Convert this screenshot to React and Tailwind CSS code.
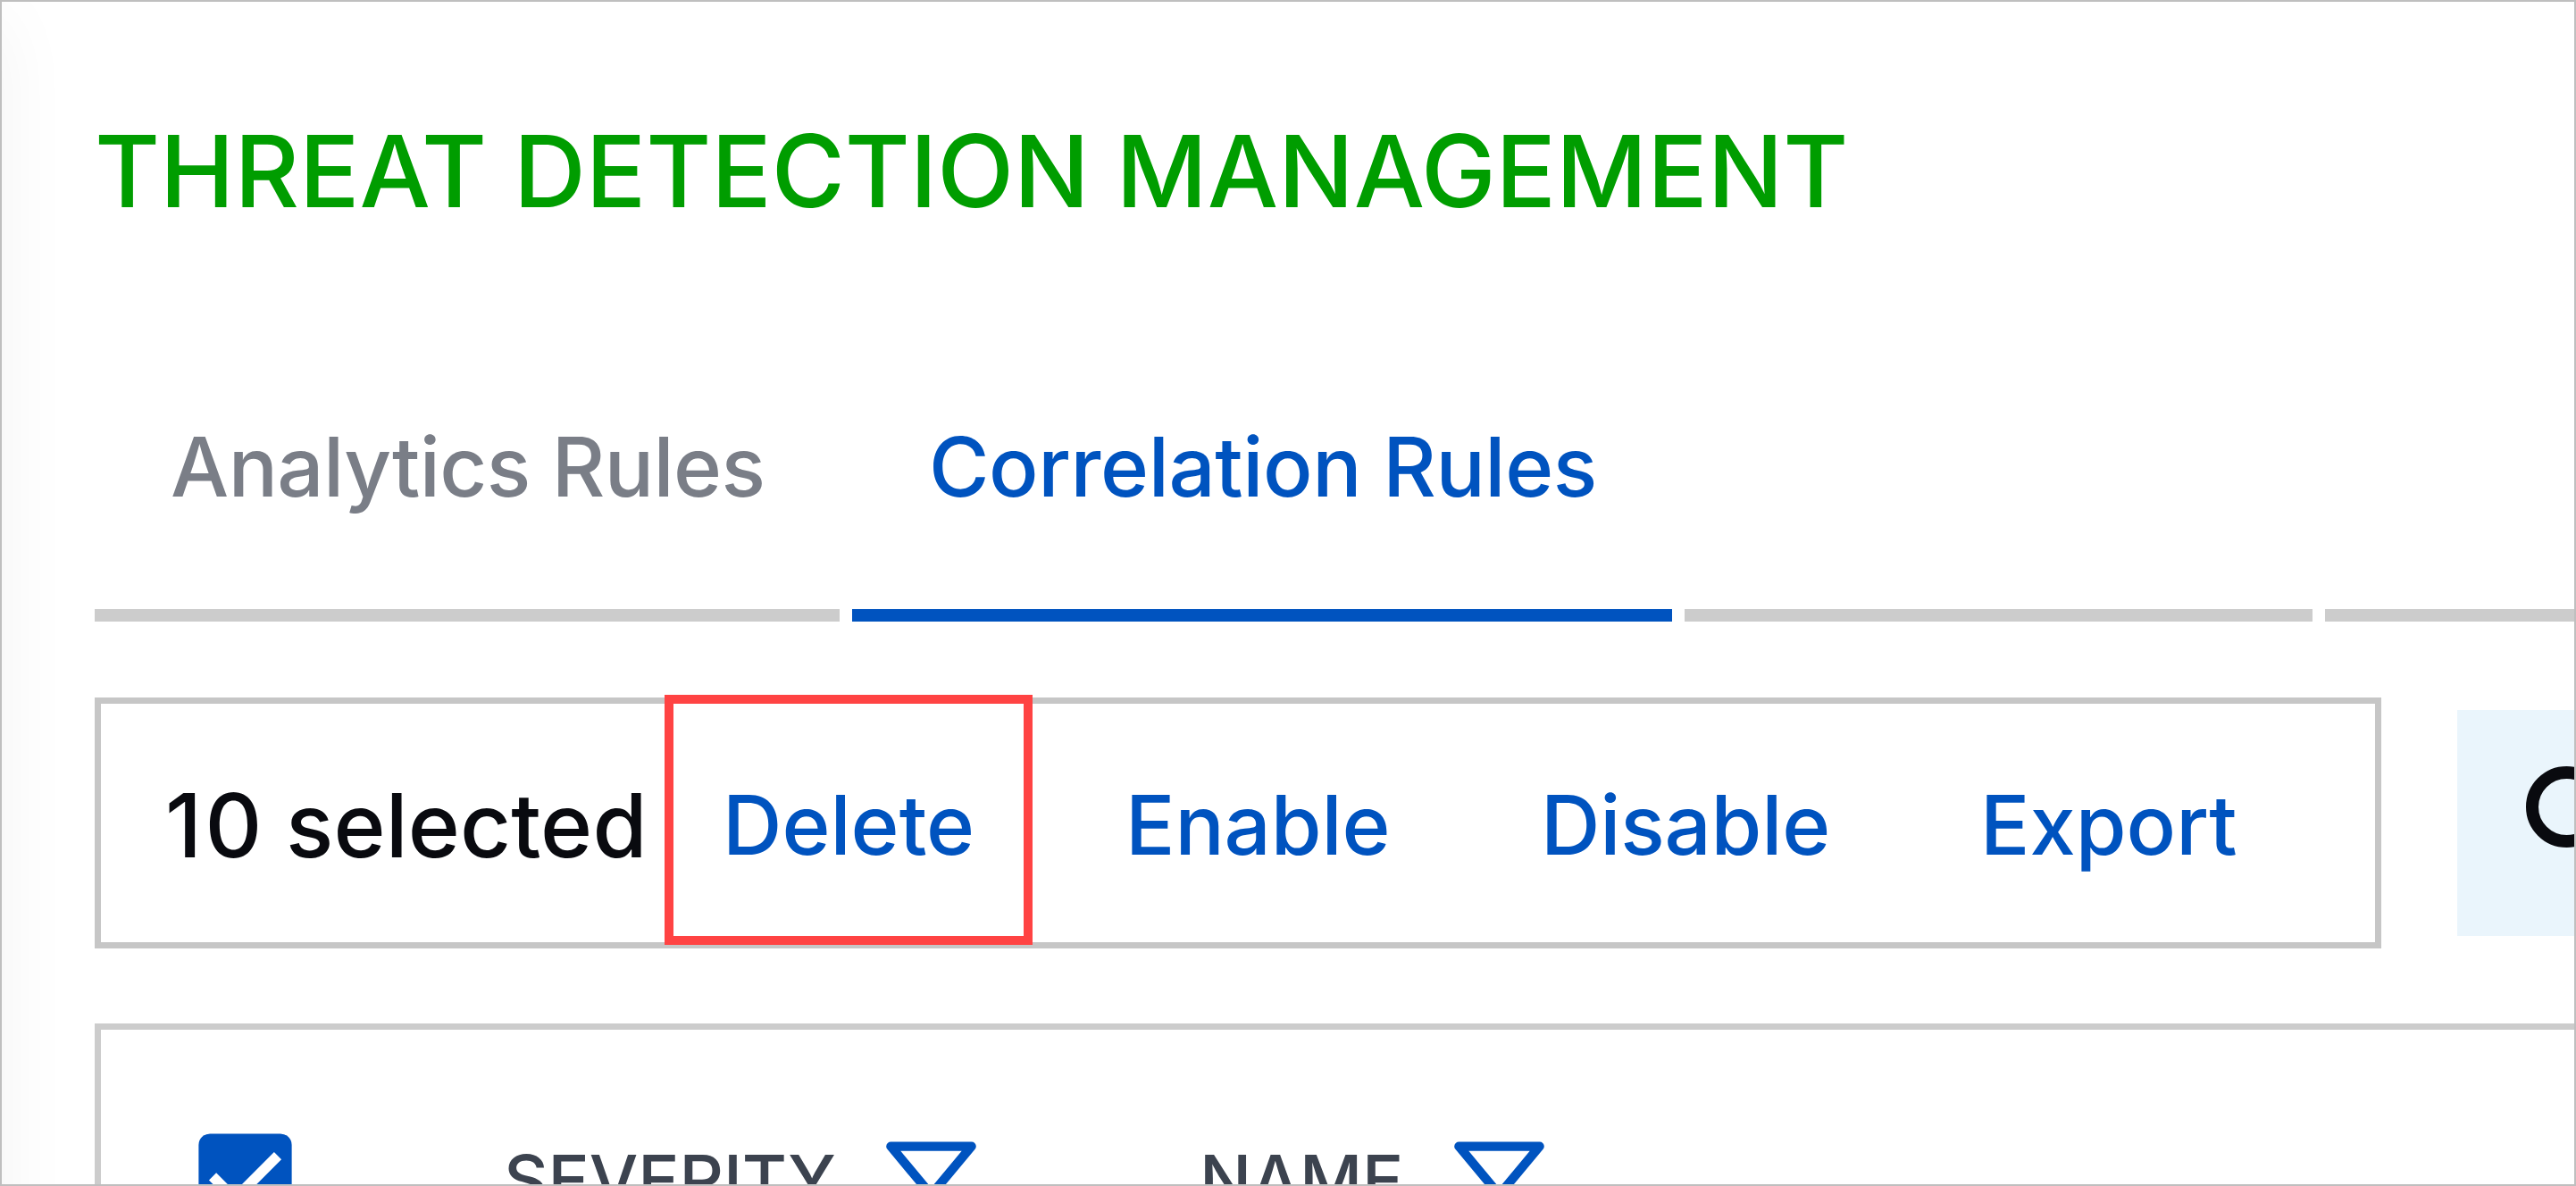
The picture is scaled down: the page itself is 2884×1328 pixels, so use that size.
import React, { useState } from 'react';

const tabs = [
  { id: 'analytics', label: 'Analytics Rules', width: 'w-[834px]', pad: 'pl-[85px] tracking-[-0.6px]' },
  { id: 'correlation', label: 'Correlation Rules', width: 'w-[918px]', pad: 'pl-[86px] tracking-[-0.4px]' },
  { id: 'third', label: '', width: 'w-[703px]', pad: '' },
  { id: 'fourth', label: '', width: 'flex-1', pad: '' },
];

const CheckedBox = () => (
  <svg className="block w-[139px] h-[139px] shrink-0" viewBox="0 0 24 24">
    <rect x="3" y="3" width="18" height="18" rx="2.2" fill="#0053bf" />
    <path d="M10 17l-5-5 1.41-1.41L10 14.17l7.59-7.59L19 8z" fill="#fff" />
  </svg>
);

const FilterIcon = () => (
  <svg className="block w-[101px] h-[70px] shrink-0" viewBox="0 0 101 70">
    <path
      d="M5.3 5.6H95.7L50.5 59.8Z"
      fill="none"
      stroke="#0053bf"
      strokeWidth="10.2"
      strokeLinejoin="round"
    />
  </svg>
);

const App = () => {
  const [activeTab, setActiveTab] = useState('correlation');

  return (
    <div className="relative w-[2884px] h-[1328px] overflow-hidden border-2 border-[#bfbfbf] bg-white pl-[104px] pt-[133px] font-['Inter',sans-serif] font-medium">
      {/* Shadow cast by the side navigation */}
      <div className="absolute -left-[300px] top-[20px] w-[300px] h-[1600px] shadow-[0_0_80px_rgba(0,0,0,0.05)]" />

      <h1 className="text-[112px] leading-[112px] tracking-[-0.06px] text-[#009d00] whitespace-nowrap">
        THREAT DETECTION MANAGEMENT
      </h1>

      {/* Tabs */}
      <div className="mt-[116px] flex gap-[14px]">
        {tabs.map((tab) => (
          <button
            key={tab.id}
            onClick={() => setActiveTab(tab.id)}
            className={`flex items-center h-[333px] border-b-[14px] text-[92px] whitespace-nowrap ${tab.width} ${tab.pad} ${
              activeTab === tab.id ? 'border-[#0053bf] text-[#0053bf]' : 'border-[#cccccc] text-[#7a7e87]'
            }`}
          >
            {tab.label}
          </button>
        ))}
      </div>

      {/* Bulk actions and search */}
      <div className="mt-[85px] flex items-start gap-[85px]">
        <div className="relative flex shrink-0 items-center w-[2560px] h-[281px] border-[7px] border-[#c6c6c6] pl-[72px] pt-[5px] text-[92px] text-[#0053bf] whitespace-nowrap">
          <span className="w-[624px] shrink-0 text-[99px] tracking-[0.1px] text-[#090a0f]">
            <span className="tracking-[3.5px]">1</span>0 selected
          </span>
          <button className="w-[451px] shrink-0 text-left">Delete</button>
          <button className="w-[465px] shrink-0 text-left tracking-[-0.1px]">Enable</button>
          <button className="w-[492px] shrink-0 text-left tracking-[-0.2px]">Disable</button>
          <button className="shrink-0 text-left">Export</button>
          <div className="absolute left-[631px] -top-[10px] w-[412px] h-[280px] border-[10px] border-[#ff4343]" />
        </div>
        <div className="mt-[14px] h-[253px] flex-1 overflow-hidden bg-[#eaf5fc] pl-[77px] pt-[63px]">
          <svg className="block w-[120px] h-[120px]" viewBox="0 0 120 120">
            <circle cx="45.5" cy="45.5" r="38.5" fill="none" stroke="#090a0f" strokeWidth="14" />
            <path d="M73 73l38 38" stroke="#090a0f" strokeWidth="14" />
          </svg>
        </div>
      </div>

      {/* Rules table header */}
      <div className="mt-[84px] flex items-start h-[260px] border-l-[7px] border-t-[7px] border-[#cccccc] pl-[92px] pt-[99px] text-[#3c434f]">
        <CheckedBox />
        <span className="ml-[220px] mt-[27px] w-[428px] shrink-0 text-[77px] leading-[84px] tracking-[-0.2px]">SEVERITY</span>
        <div className="mt-[26px]">
          <FilterIcon />
        </div>
        <span className="ml-[250px] mt-[27px] w-[285px] shrink-0 text-[77px] leading-[84px] tracking-[-0.4px]">NAME</span>
        <div className="mt-[26px]">
          <FilterIcon />
        </div>
      </div>
    </div>
  );
};

export default App;
